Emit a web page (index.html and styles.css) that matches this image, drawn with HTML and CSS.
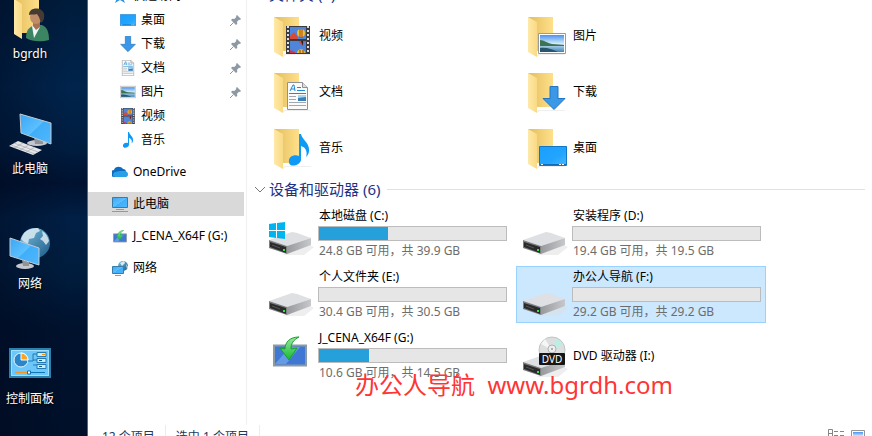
FILE: index.html
```html
<!DOCTYPE html>
<html lang="zh-CN">
<head>
    <meta charset="UTF-8">
    <meta name="viewport" content="width=device-width, initial-scale=1.0">
    <title>此电脑</title>
    <link rel="stylesheet" href="styles.css">
</head>
<body>
    <svg class="defs" aria-hidden="true">
        <defs>
            <linearGradient id="g-screen" x1="0" y1="0" x2="1" y2="1">
                <stop offset="0" stop-color="#3aa6f5"/><stop offset=".5" stop-color="#5cc0ff"/><stop offset=".51" stop-color="#40aef8"/><stop offset="1" stop-color="#4fb8ff"/>
            </linearGradient>
            <linearGradient id="g-desk" x1="0" y1="0" x2="1" y2="1">
                <stop offset="0" stop-color="#1a9fff"/><stop offset=".6" stop-color="#22a5ff"/><stop offset="1" stop-color="#48b6ff"/>
            </linearGradient>
            <linearGradient id="g-back" x1="0" y1="0" x2="1" y2="0">
                <stop offset="0" stop-color="#e3bd5c"/><stop offset="1" stop-color="#ffe08a"/>
            </linearGradient>
            <linearGradient id="g-flap" x1="0" y1="0" x2="1" y2="0">
                <stop offset="0" stop-color="#ffe9a9"/><stop offset="1" stop-color="#f9da84"/>
            </linearGradient>
            <linearGradient id="g-side" x1="0" y1="0" x2="1" y2="0">
                <stop offset="0" stop-color="#97999c"/><stop offset="1" stop-color="#c6c8cb"/>
            </linearGradient>
            <linearGradient id="g-globe" x1="0" y1="0" x2="1" y2="1">
                <stop offset="0" stop-color="#7cc0e0"/><stop offset="1" stop-color="#1d5a88"/>
            </linearGradient>
            <linearGradient id="g-sky" x1="0" y1="0" x2="0" y2="1">
                <stop offset="0" stop-color="#4b93f0"/><stop offset=".5" stop-color="#cfeaf8"/><stop offset="1" stop-color="#3f82b8"/>
            </linearGradient>
            <linearGradient id="g-green" x1="0" y1="0" x2="0" y2="1">
                <stop offset="0" stop-color="#9be8a2"/><stop offset="1" stop-color="#14b82e"/>
            </linearGradient>
            <symbol id="folder" viewBox="0 0 48 48">
                <path d="M6 5h25v34H14z" fill="url(#g-back)"/>
                <path d="M14 45l4-2h24l2-1H16z" fill="#e4e4e4" opacity=".6"/>
                <path d="M6 5l9 5v35l-9-5z" fill="url(#g-flap)"/>
            </symbol>
            <symbol id="drive" viewBox="0 0 48 48">
                <path d="M14 45h22l10-8-4-2z" fill="#ddd" opacity=".5"/>
                <path d="M1 30l23-8c2 0 4 1 5 1l14 5-24 8z" fill="#dfe0e3"/>
                <path d="M19 36l24-8v7l-24 9z" fill="url(#g-side)"/>
                <path d="M1 30l18 6v8L1 38z" fill="#7d7e80"/>
                <path d="M2 32l16 5v6L2 37z" fill="#2b2b2c"/>
                <path d="M4 35l8 3" stroke="#555"/>
                <path d="M15 39h2v2h-2z" fill="#2ee84a"/>
            </symbol>
            <symbol id="film" viewBox="0 0 24 28">
                <path d="M0 0h24v28H0z" fill="#3c3c3e"/>
                <path d="M2 0v28M22 0v28" stroke="#e0e0e0" stroke-width="2" stroke-dasharray="2 2"/>
                <path d="M4 1h16v12H4zM4 15h16v12H4z" fill="#4f86dc"/>
                <path d="M4 10l4-4 3 4 1 3H4z" fill="#d84a38"/>
                <circle cx="15" cy="7" r="4" fill="#eac12f"/>
                <path d="M14 3v9M16 3v9" stroke="#b34416"/>
                <path d="M12 15h7l-3 5z" fill="#d84a38"/><path d="M15 15h2v5z" fill="#222"/>
                <path d="M4 24l5 2v1H4z" fill="#c63a50"/><path d="M11 27c0-5 8-5 8 0z" fill="#eac12f"/><path d="M14 24v3M17 24v3" stroke="#923b14"/>
            </symbol>
            <symbol id="doc" viewBox="0 0 21 28">
                <path d="M.5.5h15l5 5v22H.5z" fill="#fafafa" stroke="#8e9296"/>
                <path d="M15.500.5v5h5" fill="#ddd" stroke="#8e9296"/>
                <path d="M3 9l3-6h1l1 6M4 7h4" fill="none" stroke="#2189d5"/>
                <path d="M10 5.500h4M10 8.500h8M2 11.500h17" stroke="#2189d5"/>
                <path d="M2 14.500h7M2 17.500h7M2 20.500h17M2 23.500h17" stroke="#a4a8ac"/>
                <path d="M11 13h8v6h-8z" fill="#3a7fb5"/><path d="M11 13h8v2l-8 1z" fill="#a7d6f2"/>
            </symbol>
            <symbol id="photo" viewBox="0 0 28 21">
                <path d="M.5.5h27v20H.5z" fill="#fff" stroke="#9a9a9a"/>
                <path d="M2 2h24v17H2z" fill="url(#g-sky)"/>
                <path d="M2 7c4 0 7 3 12 4l12 1v1H2z" fill="#3e7351"/>
                <path d="M2 15c6-1 12 1 18 4H2z" fill="#27566e"/>
            </symbol>
            <symbol id="note" viewBox="0 0 22 32">
                <path d="M11 0h2c1 6 9 9 8 17 0 3-2 5-3 6 2-6-1-10-5-11v14c-1 6-12 8-12 2-1-5 5-8 10-6z" fill="#0d99f5"/>
            </symbol>
            <symbol id="down" viewBox="0 0 24 24">
                <path d="M8 .5h8v12h7L12 23.500 1 12.500h7z" fill="#3b97e8" stroke="#2277c0"/>
            </symbol>
            <symbol id="screen" viewBox="0 0 28 20">
                <path d="M.5.5h27v19H.5z" fill="url(#g-desk)" stroke="#1276c2"/>
                <path d="M1 18.500h26" stroke="#0f6cb8"/><path d="M2 18.500h2M20 18.500h6" stroke="#fff" stroke-dasharray="2 1"/>
            </symbol>
            <symbol id="installer" viewBox="0 0 36 32">
                <path d="M2 9.500h32v20H2z" fill="#3f78d4" stroke="#8c9aa6" stroke-width="2"/>
                <path d="M3 28l15-17h10L14 28z" fill="#7fb2f2" opacity=".6"/>
                <path d="M27 1C18 1 13 6 13 13l-5-1 9 12 8-12-6 1c0-5 2-9 8-12z" fill="url(#g-green)" stroke="#16a32c"/>
            </symbol>
            <symbol id="pin" viewBox="0 0 11 11">
                <path d="M7 0l4 4-1 1-1-.3-2 2 .3 2-1.300 1.300L1 5l1.300-1.300 2 .3 2-2L6 1z" fill="#8d9aa5"/><path d="M3.500 7.500L0 11" stroke="#8d9aa5"/>
            </symbol>
            <symbol id="net" viewBox="0 0 48 48">
                <circle cx="29" cy="19" r="15" fill="url(#g-globe)"/>
                <path d="M18 9c4-4 10-5 14-5l2 3-4 2-2 5-5 1-1 5-4-2-3-3zM36 7c4 2 6 6 7 10l-3 4-3-4-3-2 3-3z" fill="#dcebf2" opacity=".85"/>
                <ellipse cx="19" cy="42" rx="9" ry="3" fill="#c4c7cb"/><path d="M16 36l7 2v4h-6z" fill="#8f9499"/>
                <path d="M4 14l29 10v17L4 32z" fill="url(#g-screen)" stroke="#c4cbd1"/>
            </symbol>
        </defs>
    </svg>

    <div class="desktop">
        <a class="shortcut" href="#">
            <svg class="shortcut-icon shortcut-icon-cut" viewBox="0 6 48 42">
                <path d="M8 0h25v39H16z" fill="url(#g-back)"/>
                <path d="M8 5l8 5v35l-8-5z" fill="url(#g-flap)"/>
                <path d="M20 44c0-8 3-11 9-13l7 0c5 2 7 7 7 15-7 2-17 2-23-2z" fill="#3b8563"/>
                <path d="M26 32l2 12 6-11z" fill="#f2f5f7"/><path d="M27 27h7v6l-4 3-3-4z" fill="#a87252"/>
                <ellipse cx="30" cy="23" rx="6" ry="7" fill="#c08d69"/>
                <path d="M23 21c0-9 14-8 15-1 1 4-1 8-3 9l-2-6-2-3c-3 1-5 0-8 1z" fill="#453b32"/>
            </svg>
            <span>bgrdh</span>
        </a>
        <a class="shortcut" href="#">
            <svg class="shortcut-icon" viewBox="0 0 48 48">
                <ellipse cx="31" cy="34" rx="10" ry="3" fill="#c4c7cb"/><path d="M28 28l9 3v4h-8z" fill="#8f9499"/>
                <path d="M14 5l31 9v21l-30-11z" fill="url(#g-screen)" stroke="#c4cbd1"/>
                <path d="M3 37l9-5 24 9-9 5z" fill="#e3e5e8"/>
                <path d="M5 36l24 9M8 34l24 9M8 39l9-5M14 41l9-5M20 43l9-5" stroke="#9ba1a8" stroke-width=".6"/>
            </svg>
            <span>此电脑</span>
        </a>
        <a class="shortcut" href="#">
            <svg class="shortcut-icon"><use href="#net"/></svg>
            <span>网络</span>
        </a>
        <a class="shortcut" href="#">
            <svg class="shortcut-icon" viewBox="0 0 48 48">
                <path d="M4 10h40v28H4z" fill="#6cc7fa" stroke="#2c80b0" stroke-width="2"/>
                <path d="M5.500 11.500h37v25h-37z" fill="none" stroke="#9fe0ff"/>
                <circle cx="15" cy="21" r="7" fill="#2b85c9" stroke="#e8f5fd"/>
                <path d="M15 21v-7a7 7 0 0 1 7 7z" fill="#f9a51e" stroke="#fff"/>
                <path d="M22 22h5v-7h4M27 21h4M27 26h4" fill="none" stroke="#2479ad"/>
                <path d="M31 13.500h9v4h-9zM31 19.500h9v4h-9zM31 25.500h9v4h-9z" fill="#c9ecff" stroke="#2479ad"/>
                <path d="M36 15.500h3" stroke="#f08c00"/><path d="M33 21.500h3M33 27.500h3" stroke="#14598a"/>
                <path d="M9 33.500h13" stroke="#f7941d"/><path d="M24 33.500h15" stroke="#1273b8"/><path d="M21.500 32h3v3h-3z" fill="#fff" stroke="#1273b8"/>
            </svg>
            <span>控制面板</span>
        </a>
    </div>

    <div class="explorer">
        <div class="main">
            <nav class="sidebar">
                <a class="nav-item nav-cut" href="#"><svg class="nav-icon" viewBox="0 0 16 16"><path d="M8 0l2 6h6l-5 4 2 5-5-3-5 3 2-5-5-4h6z" fill="#2f93e0"/></svg>快速访问</a>
                <a class="nav-item nav-sub" href="#"><svg class="nav-icon" viewBox="0 0 28 24"><use href="#screen" width="28" height="24"/></svg>桌面<svg class="pin"><use href="#pin"/></svg></a>
                <a class="nav-item nav-sub" href="#"><svg class="nav-icon"><use href="#down"/></svg>下载<svg class="pin"><use href="#pin"/></svg></a>
                <a class="nav-item nav-sub" href="#"><svg class="nav-icon"><use href="#doc"/></svg>文档<svg class="pin"><use href="#pin"/></svg></a>
                <a class="nav-item nav-sub" href="#"><svg class="nav-icon"><use href="#photo"/></svg>图片<svg class="pin"><use href="#pin"/></svg></a>
                <a class="nav-item nav-sub" href="#"><svg class="nav-icon"><use href="#film"/></svg>视频</a>
                <a class="nav-item nav-sub" href="#"><svg class="nav-icon"><use href="#note"/></svg>音乐</a>
                <a class="nav-item nav-root" href="#"><svg class="nav-icon" viewBox="0 0 16 16"><path d="M2 13a3.500 3.500 0 0 1 0-7c1-4 7-4 9-1 2 0 3 1 3 3l-6 5z" fill="#0c6cc0"/><path d="M3 13c-3-1-2-4 0-5l5-1 5 0c4 1 4 6 0 6z" fill="#28a0e8"/></svg>OneDrive</a>
                <a class="nav-item nav-root active" href="#"><svg class="nav-icon" viewBox="0 0 16 16"><path d="M.5 1.500h15v10H.5z" fill="url(#g-screen)" stroke="#3a7ba8"/><path d="M4 13.500h8M0 15.500h16" stroke="#8c9ba6"/></svg>此电脑</a>
                <a class="nav-item nav-root" href="#"><svg class="nav-icon nav-icon-small"><use href="#installer"/></svg>J_CENA_X64F (G:)</a>
                <a class="nav-item nav-root" href="#"><svg class="nav-icon" viewBox="0 0 16 16"><circle cx="11" cy="6" r="5" fill="url(#g-globe)"/><path d="M8 3l4-2 1 2-3 3zM14 4l2 3-1 2z" fill="#dcebf2"/><path d="M.5 6.500h11v7H.5z" fill="url(#g-screen)" stroke="#3a7ba8"/><path d="M3 15.500h6" stroke="#8c9ba6"/></svg>网络</a>
            </nav>

            <div class="content">
                <h2 class="group-title group-cut"><svg class="chevron" viewBox="0 0 12 12"><path d="M1 3l5 5 5-5" fill="none" stroke="#777"/></svg>文件夹 (6)</h2>
                <div class="tiles">
                    <a class="tile folder" href="#"><svg class="tile-icon" viewBox="0 0 48 48"><use href="#folder"/><use href="#film" x="18" y="14" width="24" height="28"/></svg>视频</a>
                    <a class="tile folder" href="#"><svg class="tile-icon" viewBox="0 0 48 48"><use href="#folder"/><use href="#photo" x="16" y="21" width="28" height="21"/></svg>图片</a>
                    <a class="tile folder" href="#"><svg class="tile-icon" viewBox="0 0 48 48"><use href="#folder"/><use href="#doc" x="19" y="14" width="21" height="28"/></svg>文档</a>
                    <a class="tile folder" href="#"><svg class="tile-icon" viewBox="0 0 48 48"><use href="#folder"/><use href="#down" x="20" y="18" width="24" height="24"/></svg>下载</a>
                    <a class="tile folder" href="#"><svg class="tile-icon" viewBox="0 0 48 48"><use href="#folder"/><use href="#note" x="20" y="10" width="22" height="32"/></svg>音乐</a>
                    <a class="tile folder" href="#"><svg class="tile-icon" viewBox="0 0 48 48"><use href="#folder"/><use href="#screen" x="17" y="22" width="28" height="20"/></svg>桌面</a>
                </div>

                <h2 class="group-title"><svg class="chevron" viewBox="0 0 12 12"><path d="M1 3l5 5 5-5" fill="none" stroke="#777"/></svg>设备和驱动器 (6)</h2>
                <div class="tiles">
                    <a class="tile" href="#">
                        <svg class="tile-icon" viewBox="0 0 48 48"><use href="#drive"/><path d="M1 14l7-1v7H1zM9 13l8-1v8H9zM1 21h7v7l-7-1zM9 21h8v8l-8-1z" fill="#00b4f0"/></svg>
                        <div class="info"><div class="name">本地磁盘 (C:)</div><div class="bar"><div class="fill" style="width: 37%"></div></div><div class="space">24.8 GB 可用，共 39.9 GB</div></div>
                    </a>
                    <a class="tile" href="#">
                        <svg class="tile-icon"><use href="#drive"/></svg>
                        <div class="info"><div class="name">安装程序 (D:)</div><div class="bar"></div><div class="space">19.4 GB 可用，共 19.5 GB</div></div>
                    </a>
                    <a class="tile" href="#">
                        <svg class="tile-icon"><use href="#drive"/></svg>
                        <div class="info"><div class="name">个人文件夹 (E:)</div><div class="bar"></div><div class="space">30.4 GB 可用，共 30.5 GB</div></div>
                    </a>
                    <a class="tile selected" href="#">
                        <svg class="tile-icon"><use href="#drive"/></svg>
                        <div class="info"><div class="name">办公人导航 (F:)</div><div class="bar"></div><div class="space">29.2 GB 可用，共 29.2 GB</div></div>
                    </a>
                    <a class="tile" href="#">
                        <svg class="tile-icon" viewBox="0 0 48 48"><use href="#installer" x="4" y="4" width="36" height="32"/></svg>
                        <div class="info"><div class="name">J_CENA_X64F (G:)</div><div class="bar"><div class="fill" style="width: 27%"></div></div><div class="space">10.6 GB 可用，共 14.5 GB</div></div>
                    </a>
                    <a class="tile" href="#">
                        <svg class="tile-icon" viewBox="0 0 48 48">
                            <use href="#drive"/>
                            <circle cx="30" cy="18" r="13" fill="#dcdee0" stroke="#c2c4c6"/><path d="M30 18l5-11 6 5z" fill="#b9f0e4"/><path d="M30 18L19 12l4-5z" fill="#f6f6f6"/>
                            <circle cx="30" cy="17" r="4" fill="#eee" stroke="#b0b2b4"/><circle cx="30" cy="17" r="1" fill="#999"/>
                            <rect x="17" y="21" width="26" height="12" rx="1" fill="#151515"/>
                            <text class="dvd" x="30" y="31" text-anchor="middle">DVD</text>
                        </svg>
                        <div class="info info-single"><div class="name">DVD 驱动器 (I:)</div></div>
                    </a>
                </div>
            </div>
        </div>

        <div class="status">
            <span class="count">12 个项目</span>
            <span class="count">选中 1 个项目</span>
            <div class="views">
                <button type="button" aria-label="详细信息"><svg viewBox="0 0 17 14"><path d="M.5.5h4v12h-4zM.5 4.500h4M.5 8.500h4M6 2.500h4M12 2.500h4M6 6.500h4M12 6.500h4M6 10.500h4M12 10.500h4" fill="none" stroke="#858585"/></svg></button>
                <button type="button" aria-label="大图标"><svg viewBox="0 0 14 14"><path d="M.5 1.500h13v11H.5z" fill="#fff" stroke="#959595"/><path d="M2 3h10v8H2z" fill="url(#g-sky)"/></svg></button>
            </div>
        </div>
    </div>

    <div class="watermark">办公人导航  www.bgrdh.com</div>
</body>
</html>
```

FILE: styles.css
```css
* {
    box-sizing: border-box;
    padding: 0;
    margin: 0;
}
body {
    display: flex;
    height: 100vh;
    overflow: hidden;
    font: 12px/24px "Noto Sans", "Noto Sans CJK SC", sans-serif;
    color: #000;
    background: #fff;
}
a {
    color: inherit;
    text-decoration: none;
}
svg {
    display: block;
    flex: none;
}
.defs {
    position: absolute;
    width: 0;
    height: 0;
}

/* desktop */
.desktop {
    display: flex;
    flex-direction: column;
    gap: 43px;
    flex: none;
    width: 88px;
    border-right: 1px solid #2673b0;
    background:
        linear-gradient(90deg, rgba(0, 8, 28, .4), transparent 80%),
        linear-gradient(#001c3c, #00244c 20%, #001d40 34%, #001230 42%, #001f44 50%, #001d3e 62%, #00122e 75%, #00102a);
}
.shortcut {
    display: flex;
    flex-direction: column;
    align-items: center;
    width: 60px;
    color: #fff;
    text-shadow: 1px 1px 2px #000;
}
.shortcut-icon {
    width: 48px;
    height: 48px;
}
.shortcut-icon-cut {
    height: 42px;
}

/* explorer window */
.explorer {
    display: flex;
    flex-direction: column;
    flex: 1;
    min-width: 0;
}
.main {
    display: flex;
    flex: 1;
    min-height: 0;
}
.sidebar {
    flex: none;
    width: 159px;
    padding-right: 2px;
    border-right: 1px solid #f0f0f0;
    overflow: hidden;
}
.nav-item {
    display: flex;
    align-items: center;
    gap: 5px;
    height: 24px;
    padding-left: 24px;
}
.nav-cut {
    align-items: flex-end;
    height: 8px;
}
.nav-cut .nav-icon {
    margin-bottom: 4px;
}
.nav-sub {
    padding-left: 32px;
}
.nav-root {
    margin-top: 8px;
}
.nav-icon {
    width: 16px;
    height: 16px;
}
.nav-icon-small {
    height: 13px;
}
.pin {
    width: 11px;
    height: 11px;
    margin-left: auto;
    margin-right: 3px;
}
.active {
    background: #d9d9d9;
}

.content {
    flex: 1;
    min-width: 0;
    padding: 0 7px;
    overflow: hidden;
}
.group-title {
    display: flex;
    align-items: center;
    height: 31px;
    font-size: 15px;
    font-weight: normal;
    line-height: 31px;
    color: #1e3287;
}
.group-title::after {
    content: "";
    flex: 1;
    height: 1px;
    margin-left: 7px;
    background: #e2e2e2;
}
.group-cut {
    align-items: flex-end;
    height: 10px;
    overflow: hidden;
}
.group-cut::after {
    content: none;
}
.chevron {
    width: 12px;
    height: 12px;
    margin-right: 3px;
}
.group-cut .chevron {
    margin-bottom: 10px;
}
.tiles {
    display: grid;
    grid-template-columns: repeat(auto-fill, 250px);
    gap: 4px;
    padding-left: 8px;
}
.tile {
    display: flex;
    height: 57px;
    padding: 0 4px 0 5px;
    border: 1px solid transparent;
    gap: 2px;
}
.tile-icon {
    width: 48px;
    height: 48px;
    margin-top: 4px;
}
.folder {
    align-items: center;
    height: 52px;
    gap: 3px;
}
.folder .tile-icon {
    margin-top: 0;
}
.selected {
    background: #cce8ff;
    border-color: #99d1ff;
}
.info {
    width: 189px;
    line-height: 20px;
}
.info-single {
    align-self: center;
}
.name,
.space {
    padding-left: 1px;
}
.space {
    color: #6d6d6d;
}
.bar {
    height: 15px;
    border: 1px solid #bcbcbc;
    background: #e6e6e6;
}
.fill {
    height: 13px;
    background: #26a0da;
}
.dvd {
    font-size: 10px;
    fill: #fff;
}

.status {
    display: flex;
    flex: none;
    height: 11px;
    padding: 0 7px 0 14px;
    overflow: hidden;
    color: #1e395b;
}
.count {
    height: 24px;
    margin-right: 10px;
    padding-right: 10px;
    border-right: 1px solid #ececec;
}
.views {
    display: flex;
    gap: 6px;
    margin-left: auto;
    padding-top: 4px;
}
.views button {
    height: 14px;
    border: 0;
    background: none;
}
.views svg {
    height: 14px;
}

.watermark {
    position: absolute;
    left: 355px;
    top: 367px;
    font-size: 24px;
    line-height: 36px;
    white-space: pre;
    color: #ff3535;
}
```
